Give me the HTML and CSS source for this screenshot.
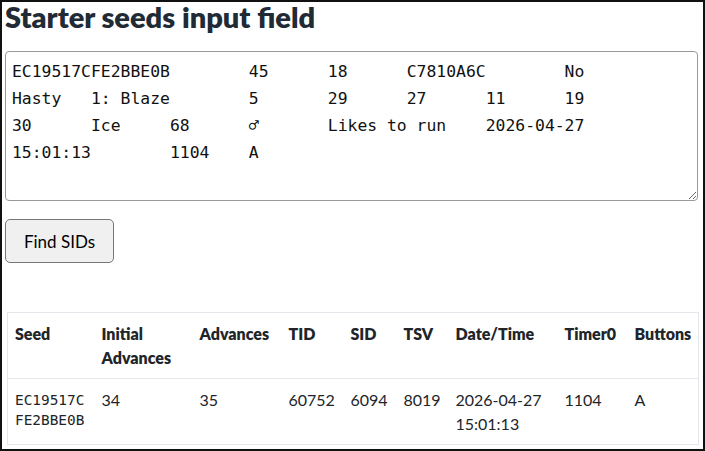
FILE: index.html
```html
<!DOCTYPE html>
<html lang="en">
<head>
    <meta charset="UTF-8">
    <meta name="viewport" content="width=device-width, initial-scale=1.0">
    <title>Starter seeds</title>
    <link rel="stylesheet" href="styles.css">
</head>
<body>
    <div class="frame">
        <h2 class="title">Starter seeds input field</h2>

        <textarea class="seed-input" spellcheck="false">EC19517CFE2BBE0B	45	18	C7810A6C	No
Hasty	1: Blaze	5	29	27	11	19
30	Ice	68	♂	Likes to run	2026-04-27
15:01:13	1104	A</textarea>

        <button class="find-btn">Find SIDs</button>

        <table class="results">
            <thead>
                <tr>
                    <th class="c-seed">Seed</th>
                    <th class="c-init">Initial Advances</th>
                    <th class="c-adv">Advances</th>
                    <th class="c-tid">TID</th>
                    <th class="c-sid">SID</th>
                    <th class="c-tsv">TSV</th>
                    <th class="c-date">Date/Time</th>
                    <th class="c-timer">Timer0</th>
                    <th class="c-btn">Buttons</th>
                </tr>
            </thead>
            <tbody>
                <tr>
                    <td class="mono">EC19517C<br>FE2BBE0B</td>
                    <td>34</td>
                    <td>35</td>
                    <td>60752</td>
                    <td>6094</td>
                    <td>8019</td>
                    <td>2026-04-27<br>15:01:13</td>
                    <td>1104</td>
                    <td>A</td>
                </tr>
            </tbody>
        </table>
    </div>
</body>
</html>
```

FILE: styles.css
```css
* {
    box-sizing: border-box;
}

body {
    margin: 0;
    font-family: "Lato", "Noto Sans", sans-serif;
    font-size: 16px;
    color: #212529;
    background: #fff;
}

.frame {
    width: 705px;
    height: 451px;
    border: 2px solid #111;
    padding: 0 3px;
    overflow: hidden;
}

.title {
    margin: 0;
    font-size: 29px;
    font-weight: 800;
    line-height: 30px;
    color: #212b36;
}

.seed-input {
    display: block;
    width: 693px;
    height: 150px;
    margin-top: 19px;
    padding: 6px 6px;
    font-family: "DejaVu Sans Mono", monospace;
    font-size: 16.4px;
    line-height: 27px;
    color: #111;
    border: 1px solid #999;
    border-radius: 4px;
    tab-size: 8;
}

.find-btn {
    display: block;
    margin-top: 18px;
    width: 109px;
    height: 44px;
    font-family: "Lato", "Noto Sans", sans-serif;
    font-size: 17px;
    color: #000;
    background: #f0f0f0;
    border: 1px solid #777;
    border-radius: 5px;
}

.results {
    margin: 49px 0 0 2px;
    width: 691px;
    border-collapse: collapse;
    border: 1px solid #e3e6ea;
    table-layout: fixed;
}

.results th,
.results td {
    text-align: left;
    vertical-align: top;
    padding: 9px 7px 8px;
    line-height: 24px;
}

.results th {
    font-weight: 800;
    border-bottom: 1px solid #e3e6ea;
}

.results td.mono {
    font-family: "DejaVu Sans Mono", monospace;
    font-size: 14.4px;
    line-height: 20px;
    padding-top: 11px;
}

.c-seed { width: 87px; }
.c-init { width: 98px; }
.c-adv { width: 89px; }
.c-tid { width: 62px; }
.c-sid { width: 53px; }
.c-tsv { width: 52px; }
.c-date { width: 109px; }
.c-timer { width: 70px; }
.c-btn { width: 71px; }
```
